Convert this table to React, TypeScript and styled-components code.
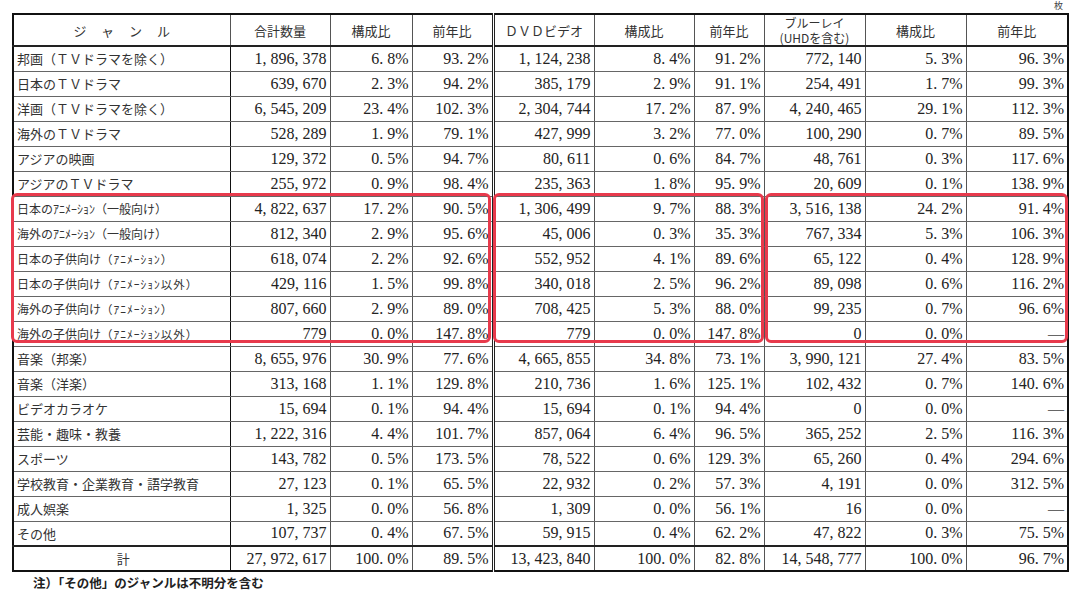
import React from 'react';
import styled, { createGlobalStyle } from 'styled-components';

const GlobalStyle = createGlobalStyle`
  html, body { margin: 0; padding: 0; background: #fff; }
  body { font-family: "Noto Sans CJK JP", sans-serif; color: #222; }
`;

const Page = styled.div`
  width: 1080px;
  height: 598px;
  overflow: hidden;
  padding-left: 12px;
  box-sizing: border-box;
`;

const UnitRow = styled.div`
  width: 1055px;
  height: 13px;
  box-sizing: border-box;
  padding-right: 4px;
  text-align: right;
  font-size: 9px;
  line-height: 11px;
  color: #444;
`;

const TableWrap = styled.div`
  position: relative;
  width: 1055px;
`;

const Table = styled.table`
  border-collapse: collapse;
  table-layout: fixed;
  width: 1055px;
  border: 2px solid #111;
`;

const Th = styled.th<{ $double?: boolean }>`
  height: 30px;
  padding: 0;
  font-weight: 400;
  font-size: 13px;
  line-height: 15px;
  color: #333;
  text-align: center;
  border: 1px solid #555;
  border-bottom: 2px solid #222;
  ${(p) => (p.$double ? 'border-left: 3px double #222;' : '')}
`;

const SpacedTh = styled(Th)`
  letter-spacing: 15px;
  padding-left: 15px;
`;

const SmallHead = styled.span`
  display: block;
  font-size: 12px;
  line-height: 15px;
`;

const Tr = styled.tr<{ $total?: boolean }>`
  height: 25px;
  ${(p) => (p.$total ? 'td { border-top: 2px solid #222; }' : '')}
`;

const GenreTd = styled.td<{ $center?: boolean; $compact?: boolean }>`
  padding: 0 0 0 3px;
  font-size: ${(p) => (p.$compact ? '12px' : '13px')};
  color: #333;
  white-space: nowrap;
  overflow: hidden;
  text-align: ${(p) => (p.$center ? 'center' : 'left')};
  border-bottom: 1px solid #666;
  border-right: 1px solid #111;
`;

const Small = styled.span`
  font-size: 11.5px;
  letter-spacing: 1px;
`;

const NumTd = styled.td<{ $double?: boolean; $dash?: boolean }>`
  padding: 0 3px 0 0;
  font-family: "Liberation Serif", serif;
  font-size: 16px;
  color: ${(p) => (p.$dash ? '#666' : '#222')};
  text-align: right;
  white-space: nowrap;
  border-bottom: 1px solid #666;
  border-right: 1px solid #555;
  ${(p) => (p.$double ? 'border-left: 3px double #222;' : '')}
`;

const Highlight = styled.div<{ $left: number; $width: number }>`
  position: absolute;
  top: 180px;
  left: ${(p) => p.$left}px;
  width: ${(p) => p.$width}px;
  height: 150px;
  box-sizing: border-box;
  border: 3px solid #e83a4c;
  border-radius: 6px;
  pointer-events: none;
`;

const Note = styled.p`
  margin: 4px 0 0 21px;
  font-size: 12.5px;
  line-height: 14px;
  font-weight: 700;
  color: #222;
`;

type Row = { genre: React.ReactNode; compact?: boolean; vals: string[] };

const r = (genre: React.ReactNode, vals: string[], compact = false): Row => ({ genre, vals, compact });

const rows: Row[] = [
  r('邦画（ＴＶドラマを除く）', ['1,896,378', '6.8%', '93.2%', '1,124,238', '8.4%', '91.2%', '772,140', '5.3%', '96.3%']),
  r('日本のＴＶドラマ', ['639,670', '2.3%', '94.2%', '385,179', '2.9%', '91.1%', '254,491', '1.7%', '99.3%']),
  r('洋画（ＴＶドラマを除く）', ['6,545,209', '23.4%', '102.3%', '2,304,744', '17.2%', '87.9%', '4,240,465', '29.1%', '112.3%']),
  r('海外のＴＶドラマ', ['528,289', '1.9%', '79.1%', '427,999', '3.2%', '77.0%', '100,290', '0.7%', '89.5%']),
  r('アジアの映画', ['129,372', '0.5%', '94.7%', '80,611', '0.6%', '84.7%', '48,761', '0.3%', '117.6%']),
  r('アジアのＴＶドラマ', ['255,972', '0.9%', '98.4%', '235,363', '1.8%', '95.9%', '20,609', '0.1%', '138.9%']),
  r('日本のｱﾆﾒｰｼｮﾝ（一般向け）', ['4,822,637', '17.2%', '90.5%', '1,306,499', '9.7%', '88.3%', '3,516,138', '24.2%', '91.4%'], true),
  r('海外のｱﾆﾒｰｼｮﾝ（一般向け）', ['812,340', '2.9%', '95.6%', '45,006', '0.3%', '35.3%', '767,334', '5.3%', '106.3%'], true),
  r(<>日本の子供向け<Small>（ｱﾆﾒｰｼｮﾝ）</Small></>, ['618,074', '2.2%', '92.6%', '552,952', '4.1%', '89.6%', '65,122', '0.4%', '128.9%'], true),
  r(<>日本の子供向け<Small>（ｱﾆﾒｰｼｮﾝ以外）</Small></>, ['429,116', '1.5%', '99.8%', '340,018', '2.5%', '96.2%', '89,098', '0.6%', '116.2%'], true),
  r(<>海外の子供向け<Small>（ｱﾆﾒｰｼｮﾝ）</Small></>, ['807,660', '2.9%', '89.0%', '708,425', '5.3%', '88.0%', '99,235', '0.7%', '96.6%'], true),
  r(<>海外の子供向け<Small>（ｱﾆﾒｰｼｮﾝ以外）</Small></>, ['779', '0.0%', '147.8%', '779', '0.0%', '147.8%', '0', '0.0%', '—'], true),
  r('音楽（邦楽）', ['8,655,976', '30.9%', '77.6%', '4,665,855', '34.8%', '73.1%', '3,990,121', '27.4%', '83.5%']),
  r('音楽（洋楽）', ['313,168', '1.1%', '129.8%', '210,736', '1.6%', '125.1%', '102,432', '0.7%', '140.6%']),
  r('ビデオカラオケ', ['15,694', '0.1%', '94.4%', '15,694', '0.1%', '94.4%', '0', '0.0%', '—']),
  r('芸能・趣味・教養', ['1,222,316', '4.4%', '101.7%', '857,064', '6.4%', '96.5%', '365,252', '2.5%', '116.3%']),
  r('スポーツ', ['143,782', '0.5%', '173.5%', '78,522', '0.6%', '129.3%', '65,260', '0.4%', '294.6%']),
  r('学校教育・企業教育・語学教育', ['27,123', '0.1%', '65.5%', '22,932', '0.2%', '57.3%', '4,191', '0.0%', '312.5%']),
  r('成人娯楽', ['1,325', '0.0%', '56.8%', '1,309', '0.0%', '56.1%', '16', '0.0%', '—']),
  r('その他', ['107,737', '0.4%', '67.5%', '59,915', '0.4%', '62.2%', '47,822', '0.3%', '75.5%']),
];

const total = ['27,972,617', '100.0%', '89.5%', '13,423,840', '100.0%', '82.8%', '14,548,777', '100.0%', '96.7%'];

const widths = [217, 100, 82, 81, 101, 100, 70, 101, 101, 102];

const fmt = (s: string) => s.replace(/([,.])/g, '$1 ');

const NumCells: React.FC<{ values: string[] }> = ({ values }) => (
  <>
    {values.map((v, i) => (
      <NumTd key={i} $double={i === 3} $dash={v === '—'}>
        {fmt(v)}
      </NumTd>
    ))}
  </>
);

export default function App() {
  return (
    <>
      <GlobalStyle />
      <Page>
        <UnitRow>枚</UnitRow>
        <TableWrap>
          <Table>
            <colgroup>
              {widths.map((w, i) => (
                <col key={i} style={{ width: w }} />
              ))}
            </colgroup>
            <thead>
              <tr>
                <SpacedTh>ジャンル</SpacedTh>
                <Th>合計数量</Th>
                <Th>構成比</Th>
                <Th>前年比</Th>
                <Th $double>ＤＶＤビデオ</Th>
                <Th>構成比</Th>
                <Th>前年比</Th>
                <Th>
                  <SmallHead>ブルーレイ</SmallHead>
                  <SmallHead>(UHDを含む)</SmallHead>
                </Th>
                <Th>構成比</Th>
                <Th>前年比</Th>
              </tr>
            </thead>
            <tbody>
              {rows.map((row, i) => (
                <Tr key={i}>
                  <GenreTd $compact={row.compact}>{row.genre}</GenreTd>
                  <NumCells values={row.vals} />
                </Tr>
              ))}
              <Tr $total>
                <GenreTd $center>計</GenreTd>
                <NumCells values={total} />
              </Tr>
            </tbody>
          </Table>
          <Highlight $left={-1} $width={480} />
          <Highlight $left={481} $width={271} />
          <Highlight $left={753} $width={303} />
        </TableWrap>
        <Note>注）「その他」のジャンルは不明分を含む</Note>
      </Page>
    </>
  );
}
